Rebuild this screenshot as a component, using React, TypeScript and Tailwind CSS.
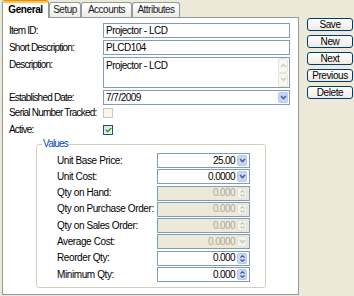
import clsx from "clsx";

const FONT = { fontFamily: '"Liberation Sans", Arial, sans-serif' };

function Chevron({ color }: { color: string }) {
  return (
    <svg width="7" height="5" viewBox="0 0 7 5">
      <path d="M1 1 L3.5 3.5 L6 1" stroke={color} strokeWidth="1.6" fill="none" />
    </svg>
  );
}

function DropBtn({ disabled = false }: { disabled?: boolean }) {
  return (
    <span
      className={clsx(
        "flex h-[11px] w-[10px] shrink-0 items-center justify-center rounded-[2px] border",
        disabled ? "border-[#E3E1D6] bg-[#F4F3EE]" : "border-[#B4C8F6] bg-[#C6D5FC]"
      )}
    >
      <Chevron color={disabled ? "#C9C7BA" : "#4D6185"} />
    </span>
  );
}

function SpinBtn({ disabled = false }: { disabled?: boolean }) {
  const c = disabled ? "#C9C7BA" : "#4D6185";
  return (
    <span
      className={clsx(
        "flex h-[11px] w-[10px] shrink-0 flex-col items-center justify-center gap-[1px] rounded-[2px] border",
        disabled ? "border-[#E3E1D6] bg-[#F4F3EE]" : "border-[#B4C8F6] bg-[#C6D5FC]"
      )}
    >
      <svg width="5" height="3" viewBox="0 0 5 3">
        <path d="M0.5 2.5 L2.5 0.7 L4.5 2.5" stroke={c} strokeWidth="1.2" fill="none" />
      </svg>
      <svg width="5" height="3" viewBox="0 0 5 3">
        <path d="M0.5 0.5 L2.5 2.3 L4.5 0.5" stroke={c} strokeWidth="1.2" fill="none" />
      </svg>
    </span>
  );
}

function ScrollBtn({ up }: { up?: boolean }) {
  return (
    <span className="flex flex-1 items-center justify-center rounded-[2px] border border-[#E6E5DD] bg-[#F7F7F3]">
      <svg width="7" height="5" viewBox="0 0 7 5">
        <path d={up ? "M1 4 L3.5 1.5 L6 4" : "M1 1 L3.5 3.5 L6 1"} stroke="#CFCDC2" strokeWidth="1.4" fill="none" />
      </svg>
    </span>
  );
}

const values = [
  { label: "Unit Base Price:", value: "25.00", kind: "drop", disabled: false },
  { label: "Unit Cost:", value: "0.0000", kind: "drop", disabled: false },
  { label: "Qty on Hand:", value: "0.000", kind: "spin", disabled: true },
  { label: "Qty on Purchase Order:", value: "0.000", kind: "spin", disabled: true },
  { label: "Qty on Sales Order:", value: "0.000", kind: "spin", disabled: true },
  { label: "Average Cost:", value: "0.0000", kind: "drop", disabled: true },
  { label: "Reorder Qty:", value: "0.000", kind: "spin", disabled: false },
  { label: "Minimum Qty:", value: "0.000", kind: "spin", disabled: false },
];

export default function App() {
  return (
    <div
      className="flex h-[296px] w-[354px] whitespace-nowrap bg-[#ECE9D8] text-[10px] leading-[12px] tracking-[-0.8px] text-black"
      style={FONT}
    >
      {/* Tab control */}
      <div className="ml-[2px] flex h-[295px] w-[297px] flex-col">
        <div className="flex h-[17px] items-end tracking-[-0.5px]">
          <div className="relative z-10 -mb-[1px] flex h-[18px] w-[47px] flex-col overflow-hidden rounded-t-[3px] border-x border-[#919B9C] bg-white">
            <div className="h-[1px] bg-[#E68B2C]" />
            <div className="h-[2px] bg-[#FFC73C]" />
            <div className="flex flex-1 items-start justify-center pt-[1px] font-bold tracking-[-0.4px]">General</div>
          </div>
          {[
            ["Setup", "w-[32px]"],
            ["Accounts", "w-[51px]"],
            ["Attributes", "w-[48px]"],
          ].map(([t, w]) => (
            <div
              key={t}
              className={clsx(
                "flex h-[15px] items-center justify-center rounded-t-[3px] border-x border-t border-[#919B9C] bg-gradient-to-b from-white to-[#ECEBE6] text-[#222]",
                w
              )}
            >
              {t}
            </div>
          ))}
        </div>

        <div className="flex flex-1 flex-col border border-[#919B9C] bg-white pl-[6px] pr-[8px] pt-[5px]">
          <div className="flex flex-col gap-[2px]">
            <div className="flex h-[15px] items-center">
              <span className="w-[94px]">Item ID:</span>
              <div className="flex h-full flex-1 items-center border border-[#7F9DB9] pl-[2px] tracking-[-0.5px]">Projector - LCD</div>
            </div>
            <div className="flex h-[15px] items-center">
              <span className="w-[94px]">Short Description:</span>
              <div className="flex h-full flex-1 items-center border border-[#7F9DB9] pl-[2px] tracking-[-0.5px]">PLCD104</div>
            </div>
            <div className="flex h-[31px]">
              <span className="w-[94px] pt-[2px]">Description:</span>
              <div className="flex h-full flex-1 border border-[#7F9DB9] pl-[2px] tracking-[-0.5px]">
                <span className="flex-1 pt-[2px]">Projector - LCD</span>
                <div className="flex w-[11px] flex-col pr-[1px]">
                  <ScrollBtn up />
                  <ScrollBtn />
                </div>
              </div>
            </div>
            <div className="flex h-[15px] items-center">
              <span className="w-[94px]">Established Date:</span>
              <div className="flex h-full flex-1 items-center border border-[#7F9DB9] pl-[2px] pr-[1px] tracking-[-0.5px]">
                <span className="flex-1">7/7/2009</span>
                <DropBtn />
              </div>
            </div>
          </div>

          <div className="mt-[3px] flex h-[10px] items-center">
            <span className="w-[94px]">Serial Number Tracked:</span>
            <span className="h-[10px] w-[10px] border border-[#CAC8BB] bg-[#F6F5EE]" />
          </div>
          <div className="mt-[7px] flex h-[10px] items-center">
            <span className="w-[94px]">Active:</span>
            <span className="flex h-[10px] w-[10px] items-center justify-center border border-[#1C5180] bg-gradient-to-br from-[#DCDBD5] to-white">
              <svg width="7" height="6" viewBox="0 0 7 6">
                <path d="M0.8 2.8 L2.7 4.7 L6.2 1" stroke="#21A121" strokeWidth="1.6" fill="none" />
              </svg>
            </span>
          </div>

          {/* Values group */}
          <div className="relative ml-[27px] mt-[9px] h-[144px] w-[230px] rounded-[3px] border border-[#D0D0BF] pl-[20px] pr-[15px] pt-[8px]">
            <span className="absolute -top-[7px] left-[5px] bg-white px-[1px] text-[#0046D5]">Values</span>
            <div className="flex flex-col gap-[1.3px]">
              {values.map((v) => (
                <div key={v.label} className="flex h-[15px] items-center">
                  <span className="w-[100px] tracking-[-0.4px]">{v.label}</span>
                  <div
                    className={clsx(
                      "flex h-full flex-1 items-center justify-end gap-[2px] border border-[#7F9DB9] pr-[2px] tracking-[-0.6px]",
                      v.disabled ? "bg-[#ECE9D8] text-[#ACA899]" : "bg-white"
                    )}
                  >
                    <span>{v.value}</span>
                    {v.kind === "drop" ? <DropBtn disabled={v.disabled} /> : <SpinBtn disabled={v.disabled} />}
                  </div>
                </div>
              ))}
            </div>
          </div>
        </div>
      </div>

      {/* Action buttons */}
      <div className="ml-[8px] mt-[18px] flex w-[46px] flex-col gap-[4px] tracking-[-0.4px]">
        {["Save", "New", "Next", "Previous", "Delete"].map((b) => (
          <button
            key={b}
            className="flex h-[13px] items-center justify-center rounded-[3px] border border-[#003C74] bg-gradient-to-b from-white to-[#ECEBE6] text-black"
          >
            {b}
          </button>
        ))}
      </div>
    </div>
  );
}
